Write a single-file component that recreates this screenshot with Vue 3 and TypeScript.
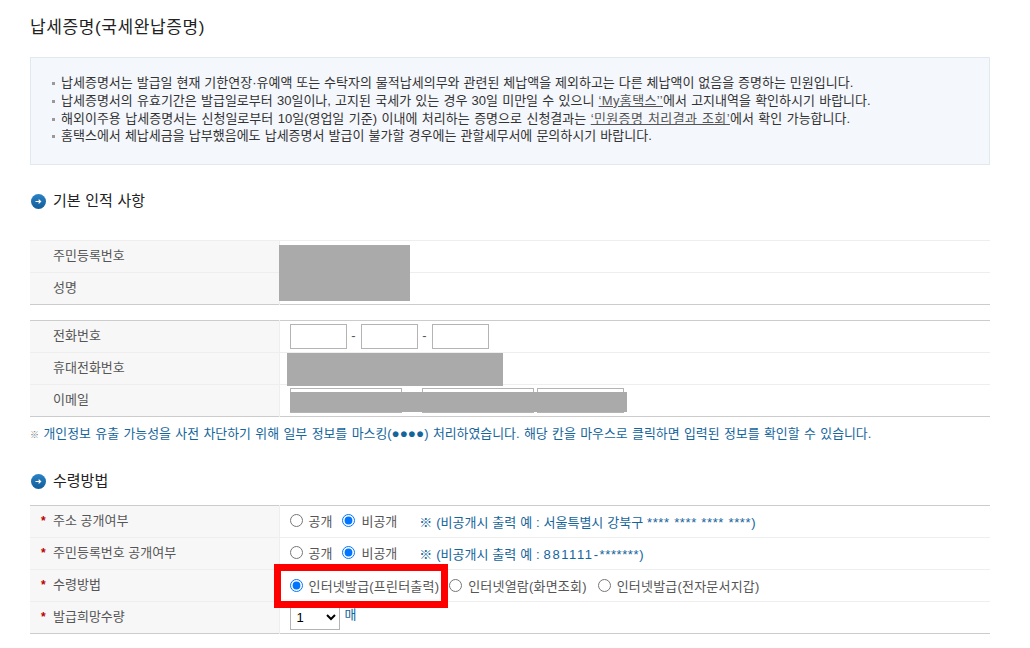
<script setup lang="ts">
const notices = [
  { before: '납세증명서는 발급일 현재 기한연장·유예액 또는 수탁자의 물적납세의무와 관련된 체납액을 제외하고는 다른 체납액이 없음을 증명하는 민원입니다.' },
  { before: '납세증명서의 유효기간은 발급일로부터 30일이나, 고지된 국세가 있는 경우 30일 미만일 수 있으니 ', link: '‘My홈택스’’', after: '에서 고지내역을 확인하시기 바랍니다.' },
  { before: '해외이주용 납세증명서는 신청일로부터 10일(영업일 기준) 이내에 처리하는 증명으로 신청결과는 ', link: '‘민원증명 처리결과 조회’', after: '에서 확인 가능합니다.' },
  { before: '홈택스에서 체납세금을 납부했음에도 납세증명서 발급이 불가할 경우에는 관할세무서에 문의하시기 바랍니다.' },
]
</script>

<template>
  <main class="page">
    <h1 class="title">납세증명(국세완납증명)</h1>

    <ul class="notice">
      <li v-for="(n, i) in notices" :key="i">{{ n.before }}<a v-if="n.link" class="lnk">{{ n.link }}</a>{{ n.after }}</li>
    </ul>

    <h2 class="sec first">
      <svg class="dot" viewBox="0 0 15 15" width="15" height="15"><defs><linearGradient id="dg" x1="0" y1="0" x2="0" y2="1"><stop offset="0" stop-color="#2b82c4" /><stop offset="1" stop-color="#115d99" /></linearGradient></defs><circle cx="7.5" cy="7.5" r="7.5" fill="url(#dg)" /><path d="M4.5 7.5h5M7.6 5.6l2 1.9-2 1.9" fill="none" stroke="#fff" stroke-width="1.2" /></svg>
      기본 인적 사항
    </h2>

    <div class="tblwrap t1">
      <table>
        <tbody>
          <tr><th>주민등록번호</th><td></td></tr>
          <tr><th>성명</th><td></td></tr>
        </tbody>
      </table>
      <div class="mask m1"></div>
    </div>

    <div class="tblwrap t2">
      <table>
        <tbody>
          <tr>
            <th>전화번호</th>
            <td class="fields">
              <input class="box" type="text" /><span class="dash">-</span><input class="box" type="text" /><span class="dash">-</span><input class="box" type="text" />
            </td>
          </tr>
          <tr><th>휴대전화번호</th><td></td></tr>
          <tr>
            <th>이메일</th>
            <td class="fields">
              <input class="box mail1" type="text" /><input class="box mail2" type="text" /><input class="box mail3" type="text" />
            </td>
          </tr>
        </tbody>
      </table>
      <div class="mask m2"></div>
      <div class="mask m3"></div>
    </div>

    <p class="note"><span class="mark">※</span> 개인정보 유출 가능성을 사전 차단하기 위해 일부 정보를 마스킹(<span class="dots">●●●●</span>) 처리하였습니다. 해당 칸을 마우스로 클릭하면 입력된 정보를 확인할 수 있습니다.</p>

    <h2 class="sec second">
      <svg class="dot" viewBox="0 0 15 15" width="15" height="15"><circle cx="7.5" cy="7.5" r="7.5" fill="url(#dg)" /><path d="M4.5 7.5h5M7.6 5.6l2 1.9-2 1.9" fill="none" stroke="#fff" stroke-width="1.2" /></svg>
      수령방법
    </h2>

    <div class="tblwrap t3">
      <table>
        <tbody>
          <tr>
            <th class="req">주소 공개여부</th>
            <td class="opts">
              <label><input type="radio" name="a" />공개</label>
              <label><input type="radio" name="a" checked />비공개</label>
              <span class="hint">※ (비공개시 출력 예 : 서울특별시 강북구 <span class="stars">**** **** **** ****</span>)</span>
            </td>
          </tr>
          <tr>
            <th class="req">주민등록번호 공개여부</th>
            <td class="opts">
              <label><input type="radio" name="b" />공개</label>
              <label><input type="radio" name="b" checked />비공개</label>
              <span class="hint">※ (비공개시 출력 예 : <span class="nums">881111-</span><span class="stars">*******</span>)</span>
            </td>
          </tr>
          <tr>
            <th class="req">수령방법</th>
            <td class="opts wide">
              <label><input type="radio" name="c" checked />인터넷발급(프린터출력)</label>
              <label><input type="radio" name="c" />인터넷열람(화면조회)</label>
              <label><input type="radio" name="c" />인터넷발급(전자문서지갑)</label>
            </td>
          </tr>
          <tr>
            <th class="req">발급희망수량</th>
            <td class="qty">
              <select><option>1</option></select><span class="unit">매</span>
            </td>
          </tr>
        </tbody>
      </table>
      <div class="redbox"></div>
    </div>
  </main>
</template>

<style>
html, body { background: #fff; }
</style>

<style scoped>
.page {
  width: 960px;
  height: 648px;
  padding-left: 30px;
  overflow: hidden;
  font-family: "Liberation Sans", "Noto Sans CJK KR", sans-serif;
  font-size: 13px;
  color: #333;
}
.title {
  margin: 0;
  padding-top: 15px;
  box-sizing: border-box;
  font-size: 17px;
  line-height: 25px;
  font-weight: 400;
  color: #222;
  letter-spacing: 0.6px;
  height: 57px;
}
.notice {
  list-style: none;
  margin: 0;
  padding: 16px 0 17px 30px;
  height: 108px;
  box-sizing: border-box;
  background: #f4f7fc;
  border: 1px solid #e2e8f0;
  color: #333;
  line-height: 17.75px;
  font-size: 13px;
  word-spacing: 0.3px;
}
.notice li { position: relative; white-space: nowrap; }
.notice li:nth-child(2) { word-spacing: 0.6px; }
.notice li:nth-child(3) { word-spacing: 0.85px; }
.notice li:nth-child(4) { word-spacing: 0.5px; }
.notice li::before {
  content: "";
  position: absolute;
  left: -9px;
  top: 8px;
  width: 3px;
  height: 3px;
  background: #999;
}
.lnk { color: #555; text-decoration: underline; letter-spacing: 0.35px; }
.sec {
  display: flex;
  align-items: center;
  gap: 7px;
  margin: 0;
  font-size: 15px;
  font-weight: 400;
  line-height: 20px;
  color: #222;
  word-spacing: 0.5px;
}
.sec.first { margin-top: 26px; padding-bottom: 29px; }
.sec.second { margin-top: 18px; padding-bottom: 14px; }
.dot { margin-left: 1px; flex: none; }
.tblwrap { position: relative; }
.t2 { margin-top: 15px; }
table {
  width: 960px;
  border-collapse: collapse;
  table-layout: fixed;
}
.t1 table { border-top: 1px solid #eee; border-bottom: 1px solid #ccc; }
.t2 table, .t3 table { border-top: 1px solid #ccc; border-bottom: 1px solid #ccc; }
tr { height: 32px; }
tr + tr th, tr + tr td { border-top: 1px solid #eee; }
th {
  width: 249px;
  padding: 0 0 5px 23px;
  box-sizing: border-box;
  background: #f7f7f7;
  border-right: 1px solid #eee;
  font-weight: 400;
  text-align: left;
  color: #555;
  white-space: nowrap;
}
td { padding: 0 0 0 10px; vertical-align: middle; white-space: nowrap; }
.req { position: relative; }
.req::before {
  content: "*";
  position: absolute;
  left: 11px;
  top: 6px;
  color: #b00;
  font-weight: 700;
  font-size: 12px;
  line-height: 18px;
}
.box {
  width: 57px;
  height: 25px;
  box-sizing: border-box;
  border: 1px solid #b4b4b4;
  background: #fff;
  padding: 0;
  margin: 0;
  vertical-align: middle;
}
.dash { display: inline-block; width: 14px; text-align: center; color: #555; }
.mail1 { width: 112px; }
.mail2 { width: 112px; margin-left: 20px; }
.mail3 { width: 87px; margin-left: 3px; }
.mask { position: absolute; background: #aaa; }
.m1 { left: 249px; top: 5px; width: 131px; height: 56px; }
.m2 { left: 257px; top: 33px; width: 216px; height: 33px; }
.m3 { left: 260px; top: 72px; width: 337px; height: 20px; }
.note {
  margin: 0;
  padding-top: 8px;
  height: 28px;
  font-size: 12.9px;
  line-height: 18px;
  color: #14659c;
  word-spacing: 0.85px;
}
.mark { font-size: 9px; color: #777; }
.dots { font-size: 13.5px; color: #14659c; }
.opts, .qty { font-size: 13px; color: #555; }
.opts { padding-bottom: 1px; }
.opts label { display: inline-flex; align-items: center; margin-right: 10px; }
.opts input { margin: 0 6px 0 0; width: 13px; height: 13px; }
.hint { margin-left: 12px; color: #14659c; word-spacing: 0.3px; }
.stars { letter-spacing: 0.6px; }
.nums { letter-spacing: 1.6px; }
.wide label { margin-right: 0; letter-spacing: 0.2px; }
.wide label + label { margin-left: 10px; }
.wide label + label + label { margin-left: 11px; }
.qty { padding-bottom: 1px; }
select {
  width: 50px;
  height: 25px;
  box-sizing: border-box;
  border: 1px solid #b4b4b4;
  background: #fff;
  font-family: "Liberation Sans", sans-serif;
  font-size: 13px;
  padding-left: 2px;
  vertical-align: middle;
}
.unit { margin-left: 5px; color: #14659c; vertical-align: 1px; }
.redbox {
  position: absolute;
  left: 244px;
  top: 59px;
  width: 174px;
  height: 44px;
  box-sizing: border-box;
  border: 7px solid #f00;
}
</style>
